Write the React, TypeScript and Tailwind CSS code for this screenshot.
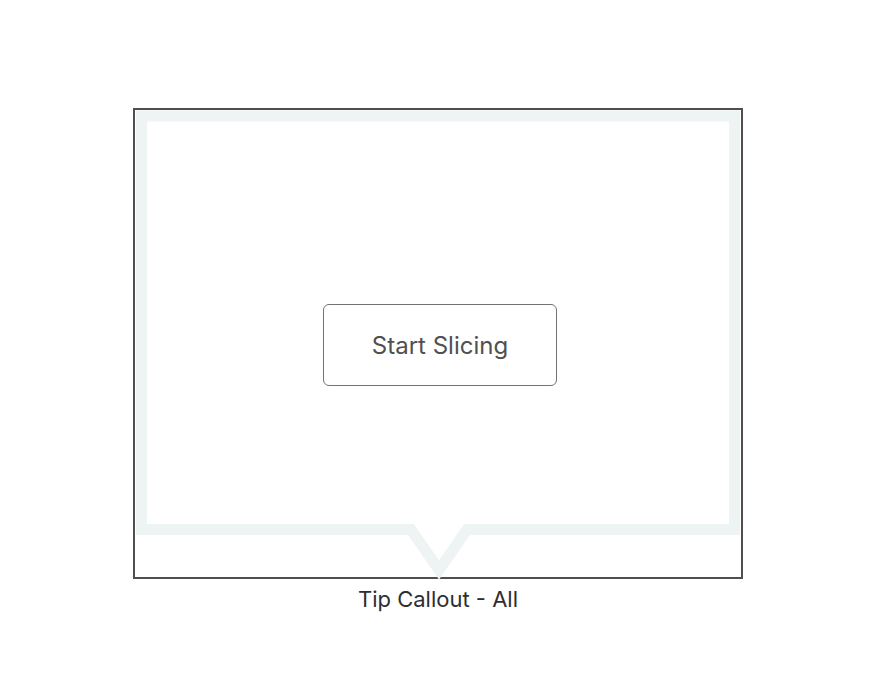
export default function App() {
  return (
    <div
      className="w-[876px] h-[692px] bg-white flex flex-col items-center pt-[108px]"
      style={{ fontFamily: "Inter, 'Liberation Sans', sans-serif" }}
    >
      {/* preview frame */}
      <div className="relative w-[610px] h-[471px] border-2 border-[#4f4f4f] flex items-center justify-center">
        <svg
          className="absolute left-[-2px] top-[-2px]"
          width="610"
          height="471"
          viewBox="134 108 610 471"
        >
          <path
            d="M142.5 116 H735.5 V529.5 H468 L440 570 L412 529.5 H142.5 Z"
            fill="none"
            stroke="#eef4f4"
            strokeWidth="11"
            strokeLinejoin="miter"
          />
        </svg>
        <button className="relative w-[234px] h-[82px] rounded-[6px] border border-[#727272] bg-white text-[24px] text-[#505050] pt-[2px] ml-[4px] mt-[3px]">
          Start Slicing
        </button>
      </div>
      <div className="mt-[8px] text-[22px] leading-6 text-[#2e2e2e]">Tip Callout - All</div>
    </div>
  );
}
